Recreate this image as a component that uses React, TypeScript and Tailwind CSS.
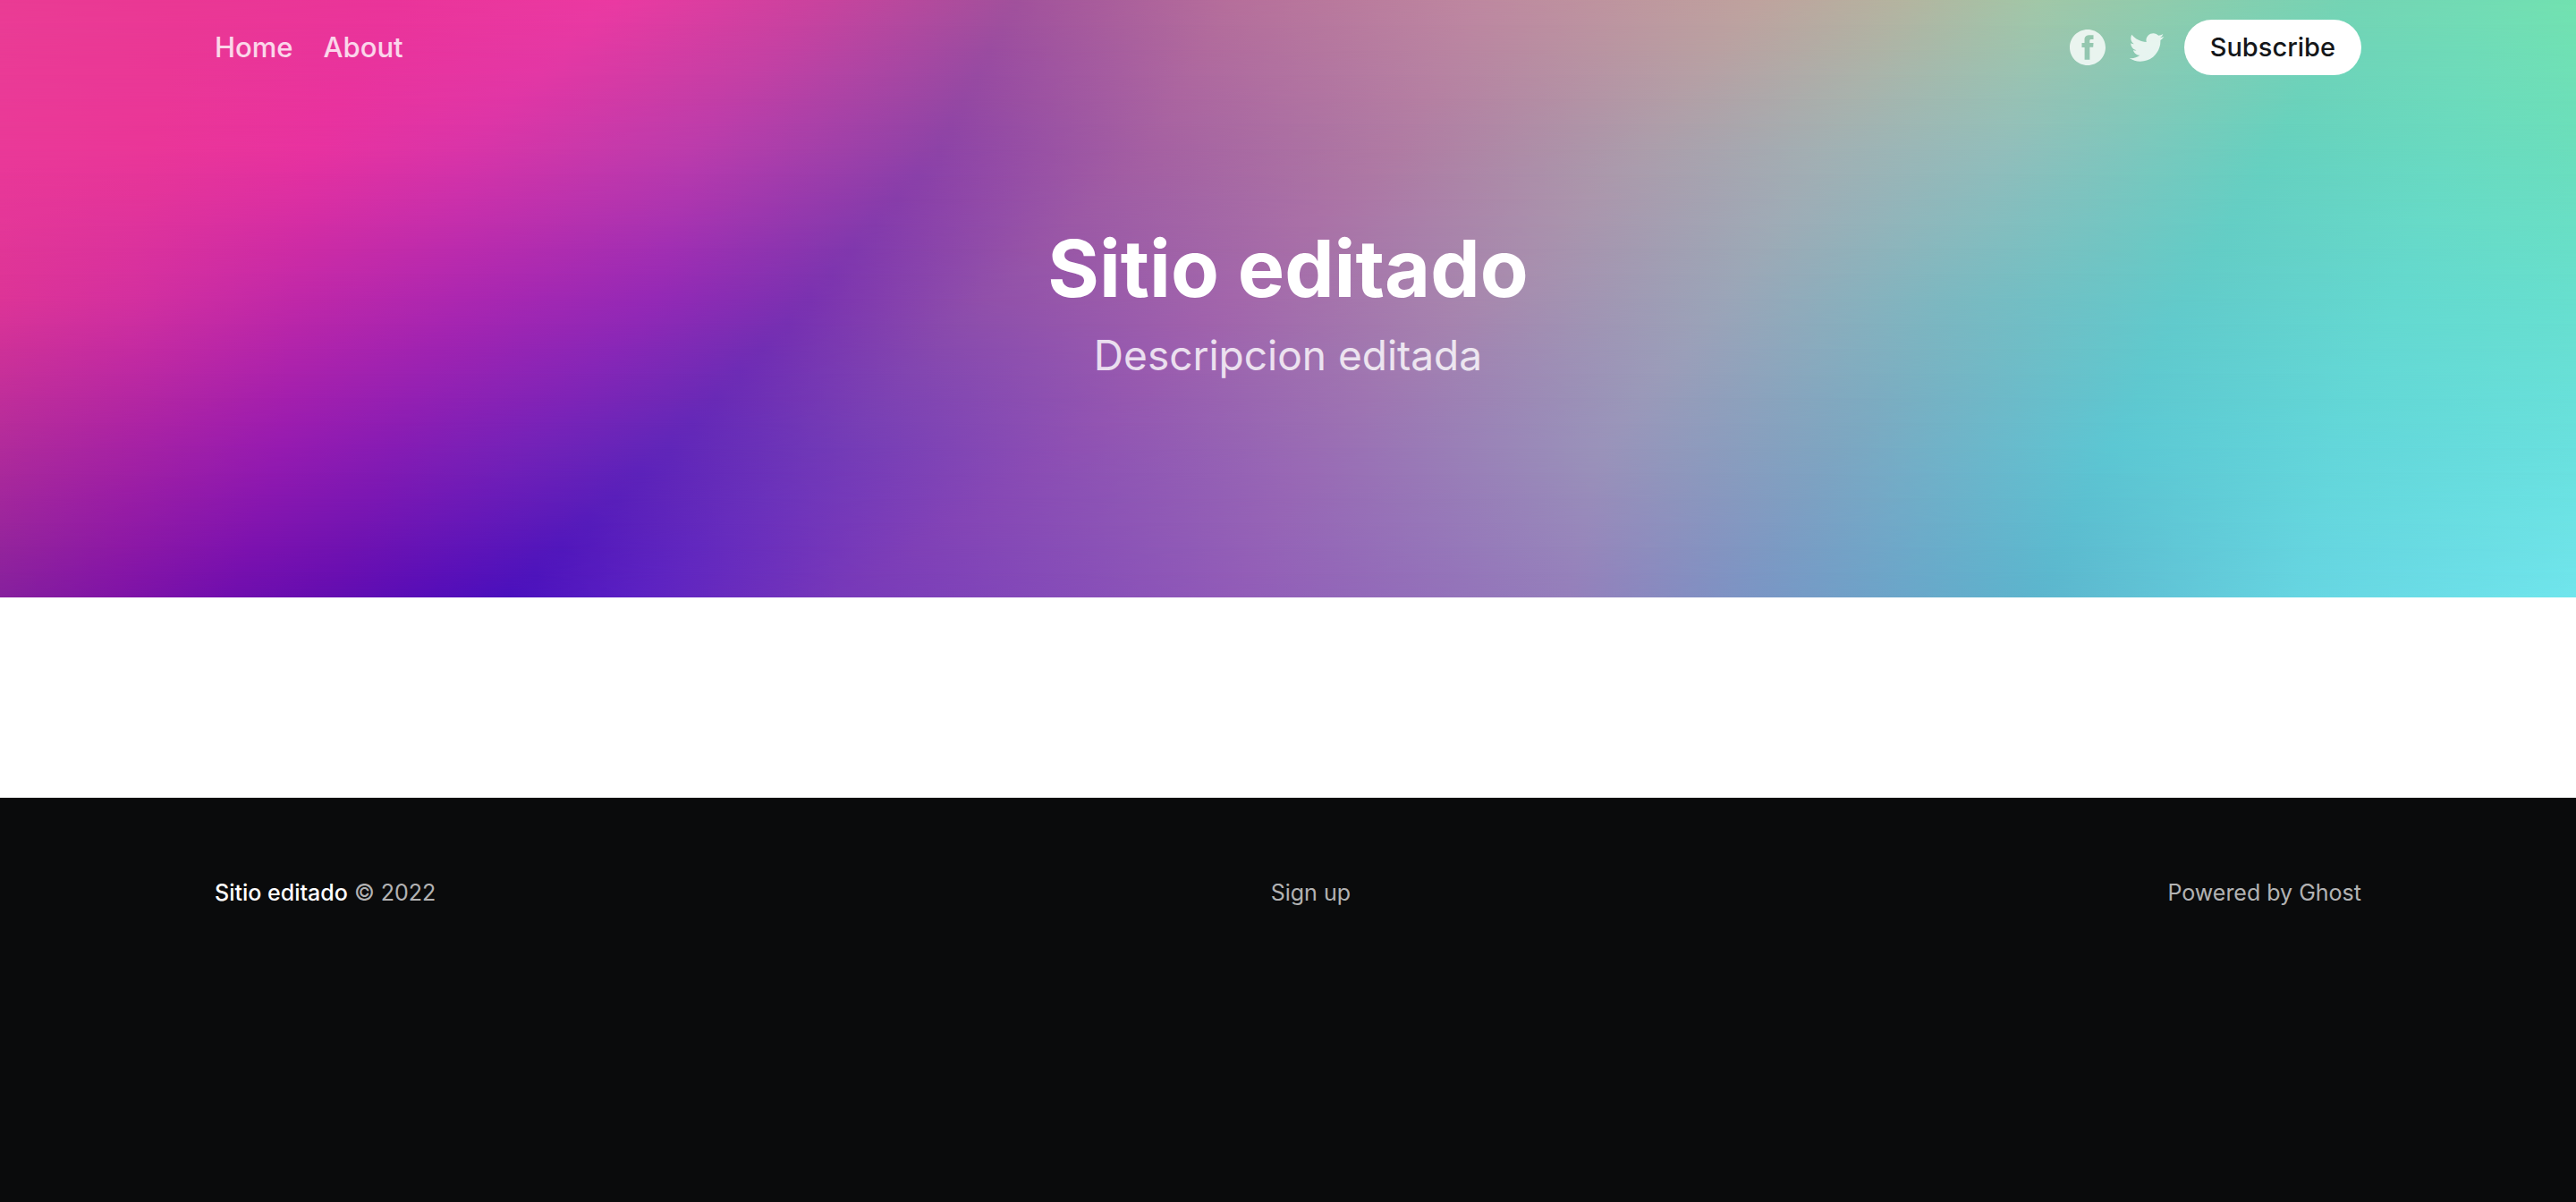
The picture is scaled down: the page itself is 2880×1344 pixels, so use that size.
const CANVAS_WIDTH = 1568;

type Stop = [number, string];

/* Five key rows of the cover's colour mesh, from top to bottom. Stop i of every row belongs to one track. */
const MESH: Stop[][] = [
  [[0, 'ea3c94'], [110, 'ea3894'], [240, 'ea349a'], [375, 'eb3aa2'], [500, 'c9439e'], [618, 'a1519c'], [750, 'b66f9b'], [900, 'be88a0'], [1070, 'bfa39e'], [1160, 'b4b5a0'], [1240, 'a2c7a8'], [1430, '74d4b4'], [1510, '72dcb4'], [1568, '72e2b0']],
  [[0, 'ea3998'], [90, 'ea3698'], [190, 'e832a0'], [280, 'da34a8'], [420, 'bc3cac'], [572, '8d43a7'], [700, 'a560a2'], [850, 'b07ba3'], [1000, 'ac9dab'], [1110, 'a2b0b3'], [1220, '92bebb'], [1385, '66d1bf'], [1490, '69dac0'], [1568, '6bdebc']],
  [[0, 'dd3497'], [80, 'd4309f'], [180, 'c028a8'], [280, 'ac27b0'], [400, '9429b6'], [494, '7a32b0'], [600, '9150aa'], [750, 'a366ab'], [900, 'a888ae'], [1050, '9ba5b8'], [1190, '7bb9c1'], [1330, '62cbca'], [1460, '64d9cf'], [1568, '67dfce']],
  [[0, 'b12b9b'], [80, 'a622a4'], [170, '961bb0'], [240, '861cb4'], [320, '7422b8'], [407, '6026b9'], [510, '733bb7'], [650, '8e50b3'], [800, '9a6cb4'], [975, '9a93ba'], [1120, '7da6c1'], [1285, '5cc7d3'], [1420, '63d6da'], [1568, '69e0de']],
  [[0, '86209d'], [70, '8014a6'], [140, '700eae'], [200, '640db0'], [260, '560db8'], [310, '4a10bd'], [380, '5a1fc3'], [510, '7738b9'], [750, '915bb8'], [955, '957fbb'], [1060, '7c94c4'], [1240, '5cb5cd'], [1400, '66d5e1'], [1568, '70e5ec']],
];

const LAYERS = 24;

function channels(hex: string) {
  return [0, 2, 4].map((i) => parseInt(hex.slice(i, i + 2), 16));
}

function rowGradient(t: number) {
  const place = t * (MESH.length - 1);
  const k = Math.min(Math.floor(place), MESH.length - 2);
  const f = place - k;
  const stops = MESH[k].map(([x, hex], i) => {
    const [nextX, nextHex] = MESH[k + 1][i];
    const to = channels(nextHex);
    const rgb = channels(hex).map((c, j) => Math.round(c + (to[j] - c) * f));
    const left = ((x + (nextX - x) * f) / CANVAS_WIDTH) * 100;
    return `rgb(${rgb.join(',')}) ${left.toFixed(2)}%`;
  });
  return `linear-gradient(to right, ${stops.join(', ')})`;
}

function CoverArt() {
  return (
    <div aria-hidden="true" className="absolute inset-0 -z-10 overflow-hidden">
      {Array.from({ length: LAYERS + 1 }, (_, i) => {
        const mask =
          i === 0
            ? undefined
            : `linear-gradient(to bottom, transparent ${((i - 1) / LAYERS) * 100}%, black ${(i / LAYERS) * 100}%)`;
        return (
          <div
            key={i}
            className="absolute inset-0"
            style={{ backgroundImage: rowGradient(i / LAYERS), maskImage: mask }}
          />
        );
      })}
    </div>
  );
}

function FacebookIcon() {
  return (
    <svg viewBox="0 0 32 32" className="size-10 fill-current" aria-hidden="true">
      <path d="M16 0c8.837 0 16 7.163 16 16s-7.163 16-16 16S0 24.837 0 16 7.163 0 16 0zm5.204 4.911h-3.546c-2.103 0-4.443.885-4.443 3.934.01 1.062 0 2.08 0 3.225h-2.433v3.872h2.509v11.147h4.61v-11.22h3.042l.275-3.81h-3.397s.007-1.695 0-2.187c0-1.205 1.253-1.136 1.329-1.136h2.054V4.911z" />
    </svg>
  );
}

function TwitterIcon() {
  return (
    <svg viewBox="0 0 32 32" className="size-11 fill-current" aria-hidden="true">
      <path d="M30.063 7.313c-.813 1.125-1.75 2.125-2.875 2.938v.75c0 1.563-.188 3.125-.688 4.625a15.088 15.088 0 0 1-2.063 4.438c-.875 1.438-2 2.688-3.25 3.813a15.015 15.015 0 0 1-4.625 2.563c-1.813.688-3.75 1-5.75 1-3.25 0-6.188-.875-8.875-2.625.438.063.875.125 1.375.125 2.688 0 5.063-.875 7.188-2.5-1.25 0-2.375-.375-3.375-1.125s-1.688-1.688-2.063-2.875c.438.063.813.125 1.125.125.5 0 1-.063 1.5-.25-1.313-.25-2.438-.938-3.313-1.938a5.673 5.673 0 0 1-1.313-3.688v-.063c.813.438 1.688.688 2.625.688a5.228 5.228 0 0 1-1.875-2c-.5-.875-.688-1.813-.688-2.75 0-1.063.25-2.063.75-2.938 1.438 1.75 3.188 3.188 5.25 4.25s4.313 1.688 6.688 1.813a5.579 5.579 0 0 1 1.5-5.438c1.125-1.125 2.5-1.688 4.125-1.688s3.063.625 4.188 1.813a11.48 11.48 0 0 0 3.688-1.375c-.438 1.375-1.313 2.438-2.563 3.188 1.125-.125 2.188-.438 3.313-.875z" />
    </svg>
  );
}

function Header() {
  return (
    <header className="relative isolate pb-59 text-white">
      <CoverArt />
      <div className="mx-auto flex w-5/6 max-w-[2400px] items-center justify-between py-[22px]">
        <nav className="flex gap-[34px] text-[31px] leading-10 font-medium text-white/80">
          <a href="#home">Home</a>
          <a href="#about">About</a>
        </nav>
        <div className="flex items-center">
          <a href="#facebook" aria-label="Facebook" className="mr-6 text-white/80">
            <FacebookIcon />
          </a>
          <a href="#twitter" aria-label="Twitter" className="mr-5 text-white/80">
            <TwitterIcon />
          </a>
          <button type="button" className="h-[62px] rounded-full bg-white px-[29px] text-[29px] font-medium text-[#15171a]">
            Subscribe
          </button>
        </div>
      </div>
      <div className="mt-34 flex flex-col items-center text-center">
        <h1 className="text-[88px] leading-[116px] font-bold">Sitio editado</h1>
        <p className="mt-1 text-[46px] leading-[70px] text-white/80">Descripcion editada</p>
      </div>
    </header>
  );
}

function Footer() {
  return (
    <footer className="grow bg-[#0a0b0c] pt-[86px] pb-40 text-[25px] leading-10 text-white/70">
      <div className="mx-auto flex w-5/6 max-w-[2400px] items-center justify-between">
        <p>
          <a href="#home" className="font-medium text-white">Sitio editado</a> © 2022
        </p>
        <a href="#signup" className="ml-5">Sign up</a>
        <a href="#ghost">Powered by Ghost</a>
      </div>
    </footer>
  );
}

export default function App() {
  return (
    <div className="flex min-h-screen flex-col bg-white font-['Inter',sans-serif]">
      <Header />
      <main className="h-56" />
      <Footer />
    </div>
  );
}
